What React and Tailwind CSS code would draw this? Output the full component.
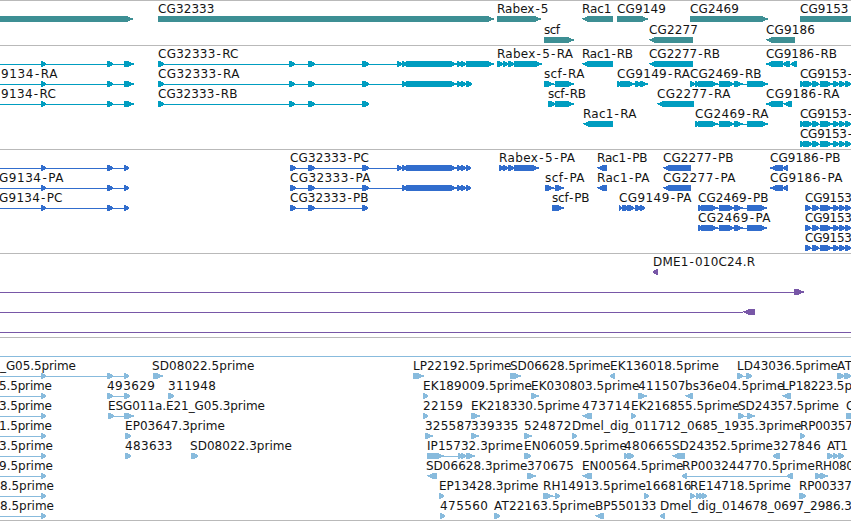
import React from "react";

const LINE_OFFSET = 3;

// 9134 and CG9153 exon blocks are shared between several isoforms
const LEFT_R = [-5, [41, 46], [107, 113], [124, 134]];
const LEFT_P = [-5, [41, 46], [107, 113], [124, 129]];
const EST_L = [-5, [41, 46]];
const CG9153R = [800, [800, 804], [803, 807], [805, 812], [812, 819], [820, 833], [833, 839], [839, 845], [845, 851]];
const CG9153P = [805, [805, 811], [812, 819], [820, 833], [833, 839], [839, 845], [845, 851]];
const CG2469P = [698, [698, 702], [701, 718], [719, 735], [734, 743], [747, 767]];

// label: [text, start, end]; glyph: [strand, lineStart, ...blocks]
const tracks = [
  {
    color: "#3d8f94",
    height: "h-[45px]",
    top: 1,
    rows: [
      {
        y: 16, base: 13,
        labels: [["CG32333", 158, 214.5], ["Rabex-5", 497, 548.5], ["Rac1", 582, 611.5], ["CG9149", 617, 666], ["CG2469", 690, 739], ["CG9153", 800, 848.5]],
        f: [[1, -5, [-5, 133]], [1, 158, [158, 494]], [1, 497, [497, 541]], [-1, 582, [582, 613]], [1, 617, [617, 648]], [1, 690, [690, 768]], [1, 800, [800, 860]]],
      },
      {
        y: 37, base: 34,
        labels: [["scf", 544, 560], ["CG2277", 649, 698], ["CG9186", 766, 815]],
        f: [[1, 544, [544, 574]], [-1, 649, [649, 693]], [-1, 766, [766, 795]]],
      },
    ],
  },
  {
    color: "#009dc0",
    height: "h-[104px]",
    top: 46,
    rows: [
      {
        y: 61, base: 58,
        labels: [["CG32333-RC", 158, 238.5], ["Rabex-5-RA", 497, 573], ["Rac1-RB", 582, 633], ["CG2277-RB", 649, 720], ["CG9186-RB", 766, 837]],
        f: [
          [1, ...LEFT_R],
          [1, 158, [158, 164], [289, 295], [308, 315], [362, 369], [397, 402], [402, 407], [406, 457], [457, 462], [461, 466], [466, 494]],
          [1, 497, [497, 503], [503, 508], [508, 514], [514, 542]],
          [-1, 582, [582, 613]], [-1, 649, [649, 693]],
          [-1, 766, [766, 783], [783, 790], [791, 797]],
        ],
      },
      {
        y: 81, base: 78,
        labels: [["9134-RA", 1, 57.5], ["CG32333-RA", 158, 239.5], ["scf-RA", 544, 584.5], ["CG9149-RA", 617, 690], ["CG2469-RB", 690, 761.5], ["CG9153-", 800, 852]],
        f: [
          [1, ...LEFT_R],
          [1, 158, [158, 164], [289, 295], [308, 315], [362, 369], [402, 407], [406, 457], [457, 462], [461, 466], [466, 472]],
          [1, 544, [544, 554], [555, 574]],
          [1, 617, [617, 621], [620, 624], [622, 627], [624, 635], [635, 641], [640, 648]],
          [1, 690, [690, 695], [695, 700], [698, 718], [719, 735], [734, 743], [747, 768]],
          [1, ...CG9153R],
        ],
      },
      {
        y: 101, base: 98,
        labels: [["9134-RC", 1, 56], ["CG32333-RB", 158, 237.5], ["scf-RB", 548, 586], ["CG2277-RA", 657, 730.5], ["CG9186-RA", 766, 839.5]],
        f: [
          [1, ...LEFT_R],
          [1, 158, [158, 164], [289, 295], [308, 315], [362, 369]],
          [1, 548, [548, 555], [555, 574]],
          [-1, 657, [657, 694]],
          [-1, 766, [766, 783], [783, 792]],
        ],
      },
      {
        y: 121, base: 118,
        labels: [["Rac1-RA", 583, 636.5], ["CG2469-RA", 695, 768.5], ["CG9153-", 800, 852]],
        f: [
          [-1, 583, [583, 613]],
          [1, 695, [695, 699], [698, 718], [719, 735], [734, 743], [747, 768]],
          [1, ...CG9153R],
        ],
      },
      { y: 141, base: 138, labels: [["CG9153-", 800, 852]], f: [[1, ...CG9153R]] },
    ],
  },
  {
    color: "#316dcd",
    height: "h-[104px]",
    top: 150,
    rows: [
      {
        y: 165, base: 162,
        labels: [["CG32333-PC", 290, 369], ["Rabex-5-PA", 499, 575], ["Rac1-PB", 597, 647.5], ["CG2277-PB", 663, 733.5], ["CG9186-PB", 770, 840.5]],
        f: [
          [1, ...LEFT_P],
          [1, 290, [290, 296], [308, 315], [362, 369], [397, 402], [402, 407], [406, 457], [457, 462], [461, 466], [466, 471]],
          [1, 499, [499, 504], [503, 508], [508, 514], [514, 539]],
          [-1, 597, [597, 607]], [-1, 663, [663, 691]],
          [-1, 770, [770, 783], [783, 788]],
        ],
      },
      {
        y: 185, base: 182,
        labels: [["G9134-PA", -1, 63.5], ["CG32333-PA", 290, 370.5], ["scf-PA", 545, 584.5], ["Rac1-PA", 597, 649.5], ["CG2277-PA", 663, 735.5], ["CG9186-PA", 770, 842.5]],
        f: [
          [1, ...LEFT_P],
          [1, 290, [290, 296], [308, 315], [362, 369], [402, 407], [406, 457], [457, 462], [461, 466], [466, 471]],
          [1, 545, [545, 554], [555, 564]],
          [-1, 597, [597, 607]], [-1, 663, [663, 691]],
          [-1, 770, [770, 783], [783, 788]],
        ],
      },
      {
        y: 205, base: 202,
        labels: [["G9134-PC", -1, 62.5], ["CG32333-PB", 290, 368.5], ["scf-PB", 552, 589.5], ["CG9149-PA", 619, 691.5], ["CG2469-PB", 698, 768.5], ["CG9153", 805, 852]],
        f: [
          [1, ...LEFT_P],
          [1, 290, [290, 296], [308, 315], [362, 368]],
          [1, 552, [552, 556], [554, 564]],
          [1, 619, [619, 622], [622, 626], [624, 628], [627, 634], [635, 641], [640, 645]],
          [1, ...CG2469P], [1, ...CG9153P],
        ],
      },
      { y: 225, base: 222, labels: [["CG2469-PA", 698, 770.5], ["CG9153", 805, 852]], f: [[1, ...CG2469P], [1, ...CG9153P]] },
      { y: 245, base: 242, labels: [["CG9153", 805, 852]], f: [[1, ...CG9153P]] },
    ],
  },
  {
    color: "#7857a7",
    height: "h-[84px]",
    top: 254,
    rows: [
      { y: 269, base: 266, labels: [["DME1-010C24.R", 653, 755]], f: [[-1, 653, [653, 658]]] },
      { y: 289, base: 286, labels: [], f: [[1, -5, [794, 804]]] },
      { y: 309, base: 306, labels: [], f: [[-1, -5, [743, 755]]] },
      { y: 329, base: 326, labels: [], f: [[1, -5, [860, 870]]] },
    ],
  },
  {
    color: "#88bbdd",
    height: "h-[183px]",
    top: 338,
    rows: [
      { y: 353, base: 350, labels: [], f: [[1, -5, [860, 870]]] },
      {
        y: 373, base: 370,
        labels: [["_G05.5prime", 0, 76], ["SD08022.5prime", 152, 254.5], ["LP22192.5prime", 413, 511.5], ["SD06628.5prime", 510, 610.5], ["EK136018.5prime", 610, 719], ["LD43036.5prime", 737, 838], ["AT", 837, 852]],
        f: [[1, ...LEFT_P], [1, 153, [153, 163]], [1, 413, [413, 424]], [1, 510, [510, 521]], [-1, 610, [610, 615]], [1, 737, [737, 743], [746, 752]], [1, 837, [837, 844], [844, 851]]],
      },
      {
        y: 393, base: 390,
        labels: [["5.5prime", -1, 52], ["493629", 107, 155], ["311948", 168, 216], ["EK189009.5prime", 423, 532], ["EK030803.5prime", 531, 639.5], ["411507", 638, 685.5], ["bs36e04.5prime", 685, 784.5], ["LP18223.5p", 782, 852]],
        f: [[1, ...EST_L], [1, 107, [107, 113], [124, 130]], [1, 168, [168, 174]], [1, 423, [423, 428]], [1, 531, [531, 539]], [1, 638, [638, 647]], [-1, 685, [685, 693]], [-1, 782, [782, 791]]],
      },
      {
        y: 413, base: 410,
        labels: [["3.5prime", -1, 52], ["ESG011a.E21_G05.3prime", 108, 265], ["22159", 423, 463], ["EK218330.5prime", 471, 580], ["473714", 582, 630.5], ["EK216855.5prime", 631, 739.5], ["SD24357.5prime", 738, 839], ["C", 846, 854.4]],
        f: [[1, ...EST_L], [1, 108, [108, 114], [124, 134]], [1, 423, [423, 428]], [1, 471, [471, 480]], [-1, 582, [582, 592]], [1, 631, [631, 636]], [1, 738, [738, 744], [747, 755]], [1, 846, [846, 862]]],
      },
      {
        y: 433, base: 430,
        labels: [["1.5prime", -1, 52], ["EP03647.3prime", 125, 225], ["325587", 425, 472], ["339335", 471, 518.5], ["524872", 524, 571.5], ["Dmel_dig_011712_0685_1935.3prime", 572, 801.5], ["RP00357", 800, 853]],
        f: [[1, ...EST_L], [1, 125, [125, 131]], [1, 425, [425, 433]], [1, 471, [471, 479]], [1, 524, [524, 532]], [1, 572, [572, 577]], [1, 800, [800, 805]]],
      },
      {
        y: 453, base: 450,
        labels: [["3.5prime", -1, 53], ["483633", 125, 172.5], ["SD08022.3prime", 190, 292], ["IP15732.3prime", 427, 523], ["EN06059.5prime", 524, 627], ["480665", 624, 672], ["SD24352.5prime", 672, 773], ["327846", 773, 821], ["AT1", 827, 848]],
        f: [[1, ...EST_L], [1, 125, [125, 131]], [1, 191, [191, 198]], [1, 427, [427, 444], [458, 462], [461, 466], [466, 475]], [1, 524, [524, 531]], [1, 624, [624, 628], [627, 634]], [-1, 672, [672, 685]], [-1, 773, [773, 780]], [1, 827, [827, 833], [833, 838], [838, 844]]],
      },
      {
        y: 473, base: 470,
        labels: [["9.5prime", -1, 53], ["SD06628.3prime", 426, 527.5], ["370675", 527, 574], ["EN00564.5prime", 582, 683.5], ["RP003244770.5prime", 682, 815], ["RH080", 815, 854]],
        f: [[1, ...EST_L], [-1, 427, [427, 437]], [1, 527, [527, 536]], [-1, 582, [582, 592]], [-1, 682, [682, 687], [787, 793]], [1, 815, [815, 821], [820, 828]]],
      },
      {
        y: 493, base: 490,
        labels: [["8.5prime", 0, 54], ["EP13428.3prime", 439, 538.5], ["RH14913.5prime", 543, 646], ["166816", 645, 691.5], ["RE14718.5prime", 690, 791], ["RP00337", 799, 852]],
        f: [[1, ...EST_L], [1, 439, [439, 444]], [1, 543, [543, 553], [555, 560]], [1, 644, [644, 649]], [1, 690, [690, 695], [696, 700], [699, 703], [702, 707]], [1, 799, [799, 803], [801, 806]]],
      },
      {
        y: 513, base: 510,
        labels: [["8.5prime", 0, 54], ["475560", 440, 488], ["AT22163.5prime", 494, 595.5], ["BP550133", 595, 656.5], ["Dmel_dig_014678_0697_2986.3", 660, 852]],
        f: [[1, ...EST_L], [1, 440, [440, 445]], [1, 494, [494, 500]], [-1, 595, [595, 604]], [-1, 660, [660, 665]]],
      },
    ],
  },
];

// Distance of each pixel row's end from the tip, top to bottom
const HEAD_WIDE = [5, 3, 0, 1, 3, 5];
const HEAD_SMALL = [3, 1, 0, 0, 1, 3];
const HEAD_TINY = [2, 1, 0, 0, 1, 2];

function headFor(width) {
  if (width <= 4) return HEAD_TINY;
  return width <= 7 ? HEAD_SMALL : HEAD_WIDE;
}

// A block ends in a stepped point on the strand's side
function block(strand, a, b, y) {
  const tail = strand > 0 ? a : b;
  const steps = headFor(b - a).map((d, row) => `H${strand > 0 ? b - d : a + d}V${y + row + 1}`);
  return `M${tail} ${y}${steps.join("")}H${tail}Z`;
}

function Feature({ data, y }) {
  const [strand, start, ...blocks] = data;
  const end = blocks[blocks.length - 1][strand > 0 ? 1 : 0];
  return (
    <g>
      {end > start && <rect x={start} y={y + LINE_OFFSET} width={end - start} height="1" />}
      {strand < 0 && blocks.length > 1 && (
        <rect x={start} y={y + LINE_OFFSET} width={end - start} height="1" />
      )}
      {blocks.map(([a, b], i) => (
        <path key={i} d={block(strand, a, b, y)} />
      ))}
    </g>
  );
}

// Hyphens get a little air on both sides
function hyphenShifts(text) {
  if (!text.includes("-")) return undefined;
  return [...text].map((c, i) => (c === "-" || text[i - 1] === "-" ? 1 : 0)).join(" ");
}

function Track({ track }) {
  return (
    <section className={`${track.height} w-full shrink-0 overflow-hidden border-b border-[#b9b9b9]`}>
      <svg className="block h-full w-full overflow-hidden" fill={track.color}>
        <g transform={`translate(0 ${-track.top})`}>
          {track.rows.map((row) => (
            <g key={row.y}>
              {row.f.map((d, i) => (
                <Feature key={i} data={d} y={row.y} />
              ))}
              {row.labels.map(([text, a, b]) => (
                <text
                  key={text + a}
                  x={a}
                  y={row.base}
                  dx={hyphenShifts(text)}
                  textLength={b - a}
                  className="fill-[#141414] font-['DejaVu_Sans',sans-serif] text-[12px]"
                >
                  {text}
                </text>
              ))}
            </g>
          ))}
        </g>
      </svg>
    </section>
  );
}

export default function App() {
  return (
    <main className="flex h-[521px] w-[851px] flex-col overflow-hidden border-t border-[#b9b9b9] bg-white">
      {tracks.map((t) => (
        <Track key={t.top} track={t} />
      ))}
    </main>
  );
}
